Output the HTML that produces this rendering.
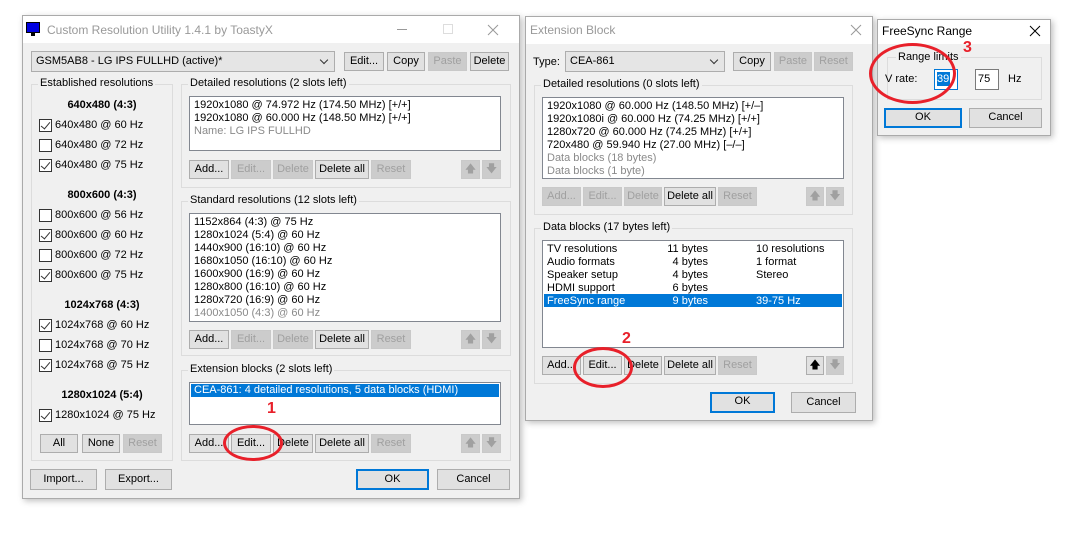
<!DOCTYPE html>
<html><head><meta charset="utf-8"><style>
*{box-sizing:border-box;margin:0;padding:0}
body{width:1070px;height:536px;background:#fff;position:relative;overflow:hidden;font-family:"Liberation Sans",sans-serif;font-size:11px;color:#000}
.a{position:absolute}
.win{position:absolute;background:#f0f0f0;border:1px solid #aaa;box-shadow:2px 2px 6px rgba(0,0,0,.25)}
.tb{position:absolute;left:0;right:0;top:0;background:#fff}
.grp{position:absolute;border:1px solid #dcdcdc}
.gt{position:absolute;background:#f0f0f0;padding:0 2px;white-space:nowrap}
.b{position:absolute;height:19px;border:1px solid #adadad;background:#e1e1e1;text-align:center;line-height:17px;white-space:nowrap}
.d{color:#a0a0a0;border-color:#c9c9c9;background:#ccc}
.p{border:2px solid #0078d7;line-height:15px}
.lb{position:absolute;background:#fff;border:1px solid #828790}
.t{position:absolute;white-space:nowrap;line-height:13px}
.g{color:#8a8a8a}
.bold{font-weight:bold}
.cb{position:absolute;width:13px;height:13px;border:1px solid #333;background:#fff}
.cb.c::after{content:"";position:absolute;left:3px;top:0px;width:4px;height:8px;border:solid #333;border-width:0 1px 1px 0;transform:rotate(40deg)}
.cmb{position:absolute;height:21px;border:1px solid #adadad;background:#e5e5e5;line-height:19px;padding-left:4px}
.cmb::after{content:"";position:absolute;right:7px;top:5px;width:5px;height:5px;border:solid #333;border-width:0 1px 1px 0;transform:rotate(45deg)}
.sel{position:absolute;background:#0078d7;color:#fff}
.red{position:absolute;border:3px solid #e8202a;border-radius:50%}
.rn{position:absolute;color:#e8202a;font-weight:bold;font-size:16px}
.x{position:absolute;width:12px;height:12px}
</style></head><body>

<!-- Window 1 -->
<div class="win" style="left:22px;top:15px;width:498px;height:484px">
 <div class="tb" style="height:27px"></div>
</div>
<div class="a" style="left:26px;top:22px;width:14px;height:11px;background:#0000e0;border:1px solid #000"></div>
<div class="a" style="left:31px;top:33px;width:4px;height:3px;background:#000"></div>
<div class="t" style="left:47px;top:24px;font-size:12px;color:#999">Custom Resolution Utility 1.4.1 by ToastyX</div>
<div class="a" style="left:397px;top:29px;width:10px;height:1px;background:#999"></div>
<div class="a" style="left:443px;top:24px;width:10px;height:10px;border:1px solid #ddd"></div>
<svg class="x" style="left:487px;top:24px" viewBox="0 0 12 12"><path d="M1 1L11 11M11 1L1 11" stroke="#999" stroke-width="1"/></svg>

<div class="cmb" style="left:31px;top:51px;width:304px">GSM5AB8 - LG IPS FULLHD (active)*</div>
<div class="b" style="left:344px;top:52px;width:40px">Edit...</div>
<div class="b" style="left:387px;top:52px;width:38px">Copy</div>
<div class="b d" style="left:428px;top:52px;width:39px">Paste</div>
<div class="b" style="left:470px;top:52px;width:39px">Delete</div>

<div class="grp" style="left:31px;top:84px;width:142px;height:377px"></div>
<div class="gt" style="left:38px;top:77px">Established resolutions</div>
<div class="t bold" style="left:31px;width:142px;text-align:center;top:99px">640x480 (4:3)</div>
<div class="cb c" style="left:39px;top:119px"></div><div class="t" style="left:55px;top:119px">640x480 @ 60 Hz</div>
<div class="cb" style="left:39px;top:139px"></div><div class="t" style="left:55px;top:139px">640x480 @ 72 Hz</div>
<div class="cb c" style="left:39px;top:159px"></div><div class="t" style="left:55px;top:159px">640x480 @ 75 Hz</div>
<div class="t bold" style="left:31px;width:142px;text-align:center;top:189px">800x600 (4:3)</div>
<div class="cb" style="left:39px;top:209px"></div><div class="t" style="left:55px;top:209px">800x600 @ 56 Hz</div>
<div class="cb c" style="left:39px;top:229px"></div><div class="t" style="left:55px;top:229px">800x600 @ 60 Hz</div>
<div class="cb" style="left:39px;top:249px"></div><div class="t" style="left:55px;top:249px">800x600 @ 72 Hz</div>
<div class="cb c" style="left:39px;top:269px"></div><div class="t" style="left:55px;top:269px">800x600 @ 75 Hz</div>
<div class="t bold" style="left:31px;width:142px;text-align:center;top:299px">1024x768 (4:3)</div>
<div class="cb c" style="left:39px;top:319px"></div><div class="t" style="left:55px;top:319px">1024x768 @ 60 Hz</div>
<div class="cb" style="left:39px;top:339px"></div><div class="t" style="left:55px;top:339px">1024x768 @ 70 Hz</div>
<div class="cb c" style="left:39px;top:359px"></div><div class="t" style="left:55px;top:359px">1024x768 @ 75 Hz</div>
<div class="t bold" style="left:31px;width:142px;text-align:center;top:389px">1280x1024 (5:4)</div>
<div class="cb c" style="left:39px;top:409px"></div><div class="t" style="left:55px;top:409px">1280x1024 @ 75 Hz</div>
<div class="b" style="left:40px;top:434px;width:38px">All</div>
<div class="b" style="left:82px;top:434px;width:38px">None</div>
<div class="b d" style="left:123px;top:434px;width:39px">Reset</div>

<div class="grp" style="left:181px;top:84px;width:330px;height:104px"></div>
<div class="gt" style="left:188px;top:77px">Detailed resolutions (2 slots left)</div>
<div class="lb" style="left:189px;top:96px;width:312px;height:55px"></div>
<div class="t" style="left:194px;top:99px">1920x1080 @ 74.972 Hz (174.50 MHz) [+/+]</div>
<div class="t" style="left:194px;top:112px">1920x1080 @ 60.000 Hz (148.50 MHz) [+/+]</div>
<div class="t g" style="left:194px;top:125px">Name: LG IPS FULLHD</div>
<div class="b" style="left:189px;top:160px;width:40px">Add...</div>
<div class="b d" style="left:231px;top:160px;width:40px">Edit...</div>
<div class="b d" style="left:273px;top:160px;width:40px">Delete</div>
<div class="b" style="left:315px;top:160px;width:54px">Delete all</div>
<div class="b d" style="left:371px;top:160px;width:40px">Reset</div>
<div class="b d" style="left:461px;top:160px;width:19px">🡅</div>
<div class="b d" style="left:482px;top:160px;width:19px">🡇</div>

<div class="grp" style="left:181px;top:201px;width:330px;height:155px"></div>
<div class="gt" style="left:188px;top:194px">Standard resolutions (12 slots left)</div>
<div class="lb" style="left:189px;top:213px;width:312px;height:109px"></div>
<div class="t" style="left:194px;top:216px">1152x864 (4:3) @ 75 Hz</div>
<div class="t" style="left:194px;top:229px">1280x1024 (5:4) @ 60 Hz</div>
<div class="t" style="left:194px;top:242px">1440x900 (16:10) @ 60 Hz</div>
<div class="t" style="left:194px;top:255px">1680x1050 (16:10) @ 60 Hz</div>
<div class="t" style="left:194px;top:268px">1600x900 (16:9) @ 60 Hz</div>
<div class="t" style="left:194px;top:281px">1280x800 (16:10) @ 60 Hz</div>
<div class="t" style="left:194px;top:294px">1280x720 (16:9) @ 60 Hz</div>
<div class="t g" style="left:194px;top:307px">1400x1050 (4:3) @ 60 Hz</div>
<div class="b" style="left:189px;top:330px;width:40px">Add...</div>
<div class="b d" style="left:231px;top:330px;width:40px">Edit...</div>
<div class="b d" style="left:273px;top:330px;width:40px">Delete</div>
<div class="b" style="left:315px;top:330px;width:54px">Delete all</div>
<div class="b d" style="left:371px;top:330px;width:40px">Reset</div>
<div class="b d" style="left:461px;top:330px;width:19px">🡅</div>
<div class="b d" style="left:482px;top:330px;width:19px">🡇</div>

<div class="grp" style="left:181px;top:370px;width:330px;height:91px"></div>
<div class="gt" style="left:188px;top:363px">Extension blocks (2 slots left)</div>
<div class="lb" style="left:189px;top:382px;width:312px;height:43px"></div>
<div class="sel t" style="left:191px;top:384px;width:308px;height:13px;padding-left:3px">CEA-861: 4 detailed resolutions, 5 data blocks (HDMI)</div>
<div class="b" style="left:189px;top:434px;width:40px">Add...</div>
<div class="b" style="left:231px;top:434px;width:40px">Edit...</div>
<div class="b" style="left:273px;top:434px;width:40px">Delete</div>
<div class="b" style="left:315px;top:434px;width:54px">Delete all</div>
<div class="b d" style="left:371px;top:434px;width:40px">Reset</div>
<div class="b d" style="left:461px;top:434px;width:19px">🡅</div>
<div class="b d" style="left:482px;top:434px;width:19px">🡇</div>
<div class="rn" style="left:267px;top:400px">1</div>
<div class="red" style="left:223px;top:425px;width:60px;height:36px"></div>

<div class="b" style="left:30px;top:469px;width:67px;height:21px;line-height:19px">Import...</div>
<div class="b" style="left:105px;top:469px;width:67px;height:21px;line-height:19px">Export...</div>
<div class="b p" style="left:356px;top:469px;width:73px;height:21px;line-height:17px">OK</div>
<div class="b" style="left:437px;top:469px;width:73px;height:21px;line-height:19px">Cancel</div>

<!-- Window 2 -->
<div class="win" style="left:525px;top:16px;width:348px;height:405px">
 <div class="tb" style="height:27px"></div>
</div>
<div class="t" style="left:530px;top:24px;font-size:12px;color:#999">Extension Block</div>
<svg class="x" style="left:850px;top:24px" viewBox="0 0 12 12"><path d="M1 1L11 11M11 1L1 11" stroke="#999" stroke-width="1"/></svg>
<div class="t" style="left:533px;top:56px">Type:</div>
<div class="cmb" style="left:565px;top:51px;width:160px">CEA-861</div>
<div class="b" style="left:733px;top:52px;width:38px">Copy</div>
<div class="b d" style="left:774px;top:52px;width:38px">Paste</div>
<div class="b d" style="left:814px;top:52px;width:39px">Reset</div>

<div class="grp" style="left:534px;top:85px;width:319px;height:130px"></div>
<div class="gt" style="left:541px;top:78px">Detailed resolutions (0 slots left)</div>
<div class="lb" style="left:542px;top:97px;width:302px;height:82px"></div>
<div class="t" style="left:547px;top:100px">1920x1080 @ 60.000 Hz (148.50 MHz) [+/–]</div>
<div class="t" style="left:547px;top:113px">1920x1080i @ 60.000 Hz (74.25 MHz) [+/+]</div>
<div class="t" style="left:547px;top:126px">1280x720 @ 60.000 Hz (74.25 MHz) [+/+]</div>
<div class="t" style="left:547px;top:139px">720x480 @ 59.940 Hz (27.00 MHz) [–/–]</div>
<div class="t g" style="left:547px;top:152px">Data blocks (18 bytes)</div>
<div class="t g" style="left:547px;top:165px">Data blocks (1 byte)</div>
<div class="b d" style="left:542px;top:187px;width:39px">Add...</div>
<div class="b d" style="left:583px;top:187px;width:39px">Edit...</div>
<div class="b d" style="left:624px;top:187px;width:38px">Delete</div>
<div class="b" style="left:664px;top:187px;width:52px">Delete all</div>
<div class="b d" style="left:718px;top:187px;width:39px">Reset</div>
<div class="b d" style="left:806px;top:187px;width:18px">🡅</div>
<div class="b d" style="left:826px;top:187px;width:18px">🡇</div>

<div class="grp" style="left:534px;top:228px;width:319px;height:156px"></div>
<div class="gt" style="left:541px;top:221px">Data blocks (17 bytes left)</div>
<div class="lb" style="left:542px;top:240px;width:302px;height:108px"></div>
<div class="sel" style="left:544px;top:294px;width:298px;height:13px"></div>
<div class="t" style="left:547px;top:243px">TV resolutions</div><div class="t" style="left:640px;width:68px;text-align:right;top:243px">11 bytes</div><div class="t" style="left:756px;top:243px">10 resolutions</div>
<div class="t" style="left:547px;top:256px">Audio formats</div><div class="t" style="left:640px;width:68px;text-align:right;top:256px">4 bytes</div><div class="t" style="left:756px;top:256px">1 format</div>
<div class="t" style="left:547px;top:269px">Speaker setup</div><div class="t" style="left:640px;width:68px;text-align:right;top:269px">4 bytes</div><div class="t" style="left:756px;top:269px">Stereo</div>
<div class="t" style="left:547px;top:282px">HDMI support</div><div class="t" style="left:640px;width:68px;text-align:right;top:282px">6 bytes</div>
<div class="t" style="left:547px;top:295px;color:#fff">FreeSync range</div><div class="t" style="left:640px;width:68px;text-align:right;top:295px;color:#fff">9 bytes</div><div class="t" style="left:756px;top:295px;color:#fff">39-75 Hz</div>
<div class="b" style="left:542px;top:356px;width:39px">Add...</div>
<div class="b" style="left:583px;top:356px;width:39px">Edit...</div>
<div class="b" style="left:624px;top:356px;width:38px">Delete</div>
<div class="b" style="left:664px;top:356px;width:52px">Delete all</div>
<div class="b d" style="left:718px;top:356px;width:39px">Reset</div>
<div class="b" style="left:806px;top:356px;width:18px">🡅</div>
<div class="b d" style="left:826px;top:356px;width:18px">🡇</div>
<div class="rn" style="left:622px;top:330px">2</div>
<div class="red" style="left:573px;top:347px;width:60px;height:41px"></div>
<div class="b p" style="left:710px;top:392px;width:65px;height:21px">OK</div>
<div class="b" style="left:791px;top:392px;width:65px;height:21px;line-height:19px">Cancel</div>

<!-- Window 3 -->
<div class="win" style="left:877px;top:19px;width:174px;height:117px">
 <div class="tb" style="height:24px"></div>
</div>
<div class="t" style="left:882px;top:25px;font-size:12px">FreeSync Range</div>
<svg class="x" style="left:1029px;top:25px" viewBox="0 0 12 12"><path d="M1 1L11 11M11 1L1 11" stroke="#000" stroke-width="1"/></svg>
<div class="grp" style="left:887px;top:57px;width:155px;height:43px"></div>
<div class="gt" style="left:896px;top:51px">Range limits</div>
<div class="t" style="left:885px;top:73px">V rate:</div>
<div class="a" style="left:934px;top:69px;width:24px;height:21px;background:#fff;border:1px solid #0078d7"></div>
<div class="a" style="left:937px;top:72px;width:13px;height:14px;background:#0078d7;color:#fff;line-height:14px">39</div>
<div class="a" style="left:975px;top:69px;width:24px;height:21px;background:#fff;border:1px solid #7a7a7a;line-height:19px;padding-left:2px">75</div>
<div class="t" style="left:1008px;top:73px">Hz</div>
<div class="b p" style="left:884px;top:108px;width:78px;height:20px">OK</div>
<div class="b" style="left:969px;top:108px;width:73px;height:20px">Cancel</div>
<div class="rn" style="left:963px;top:39px">3</div>
<div class="red" style="left:869px;top:43px;width:87px;height:61px"></div>

</body></html>
